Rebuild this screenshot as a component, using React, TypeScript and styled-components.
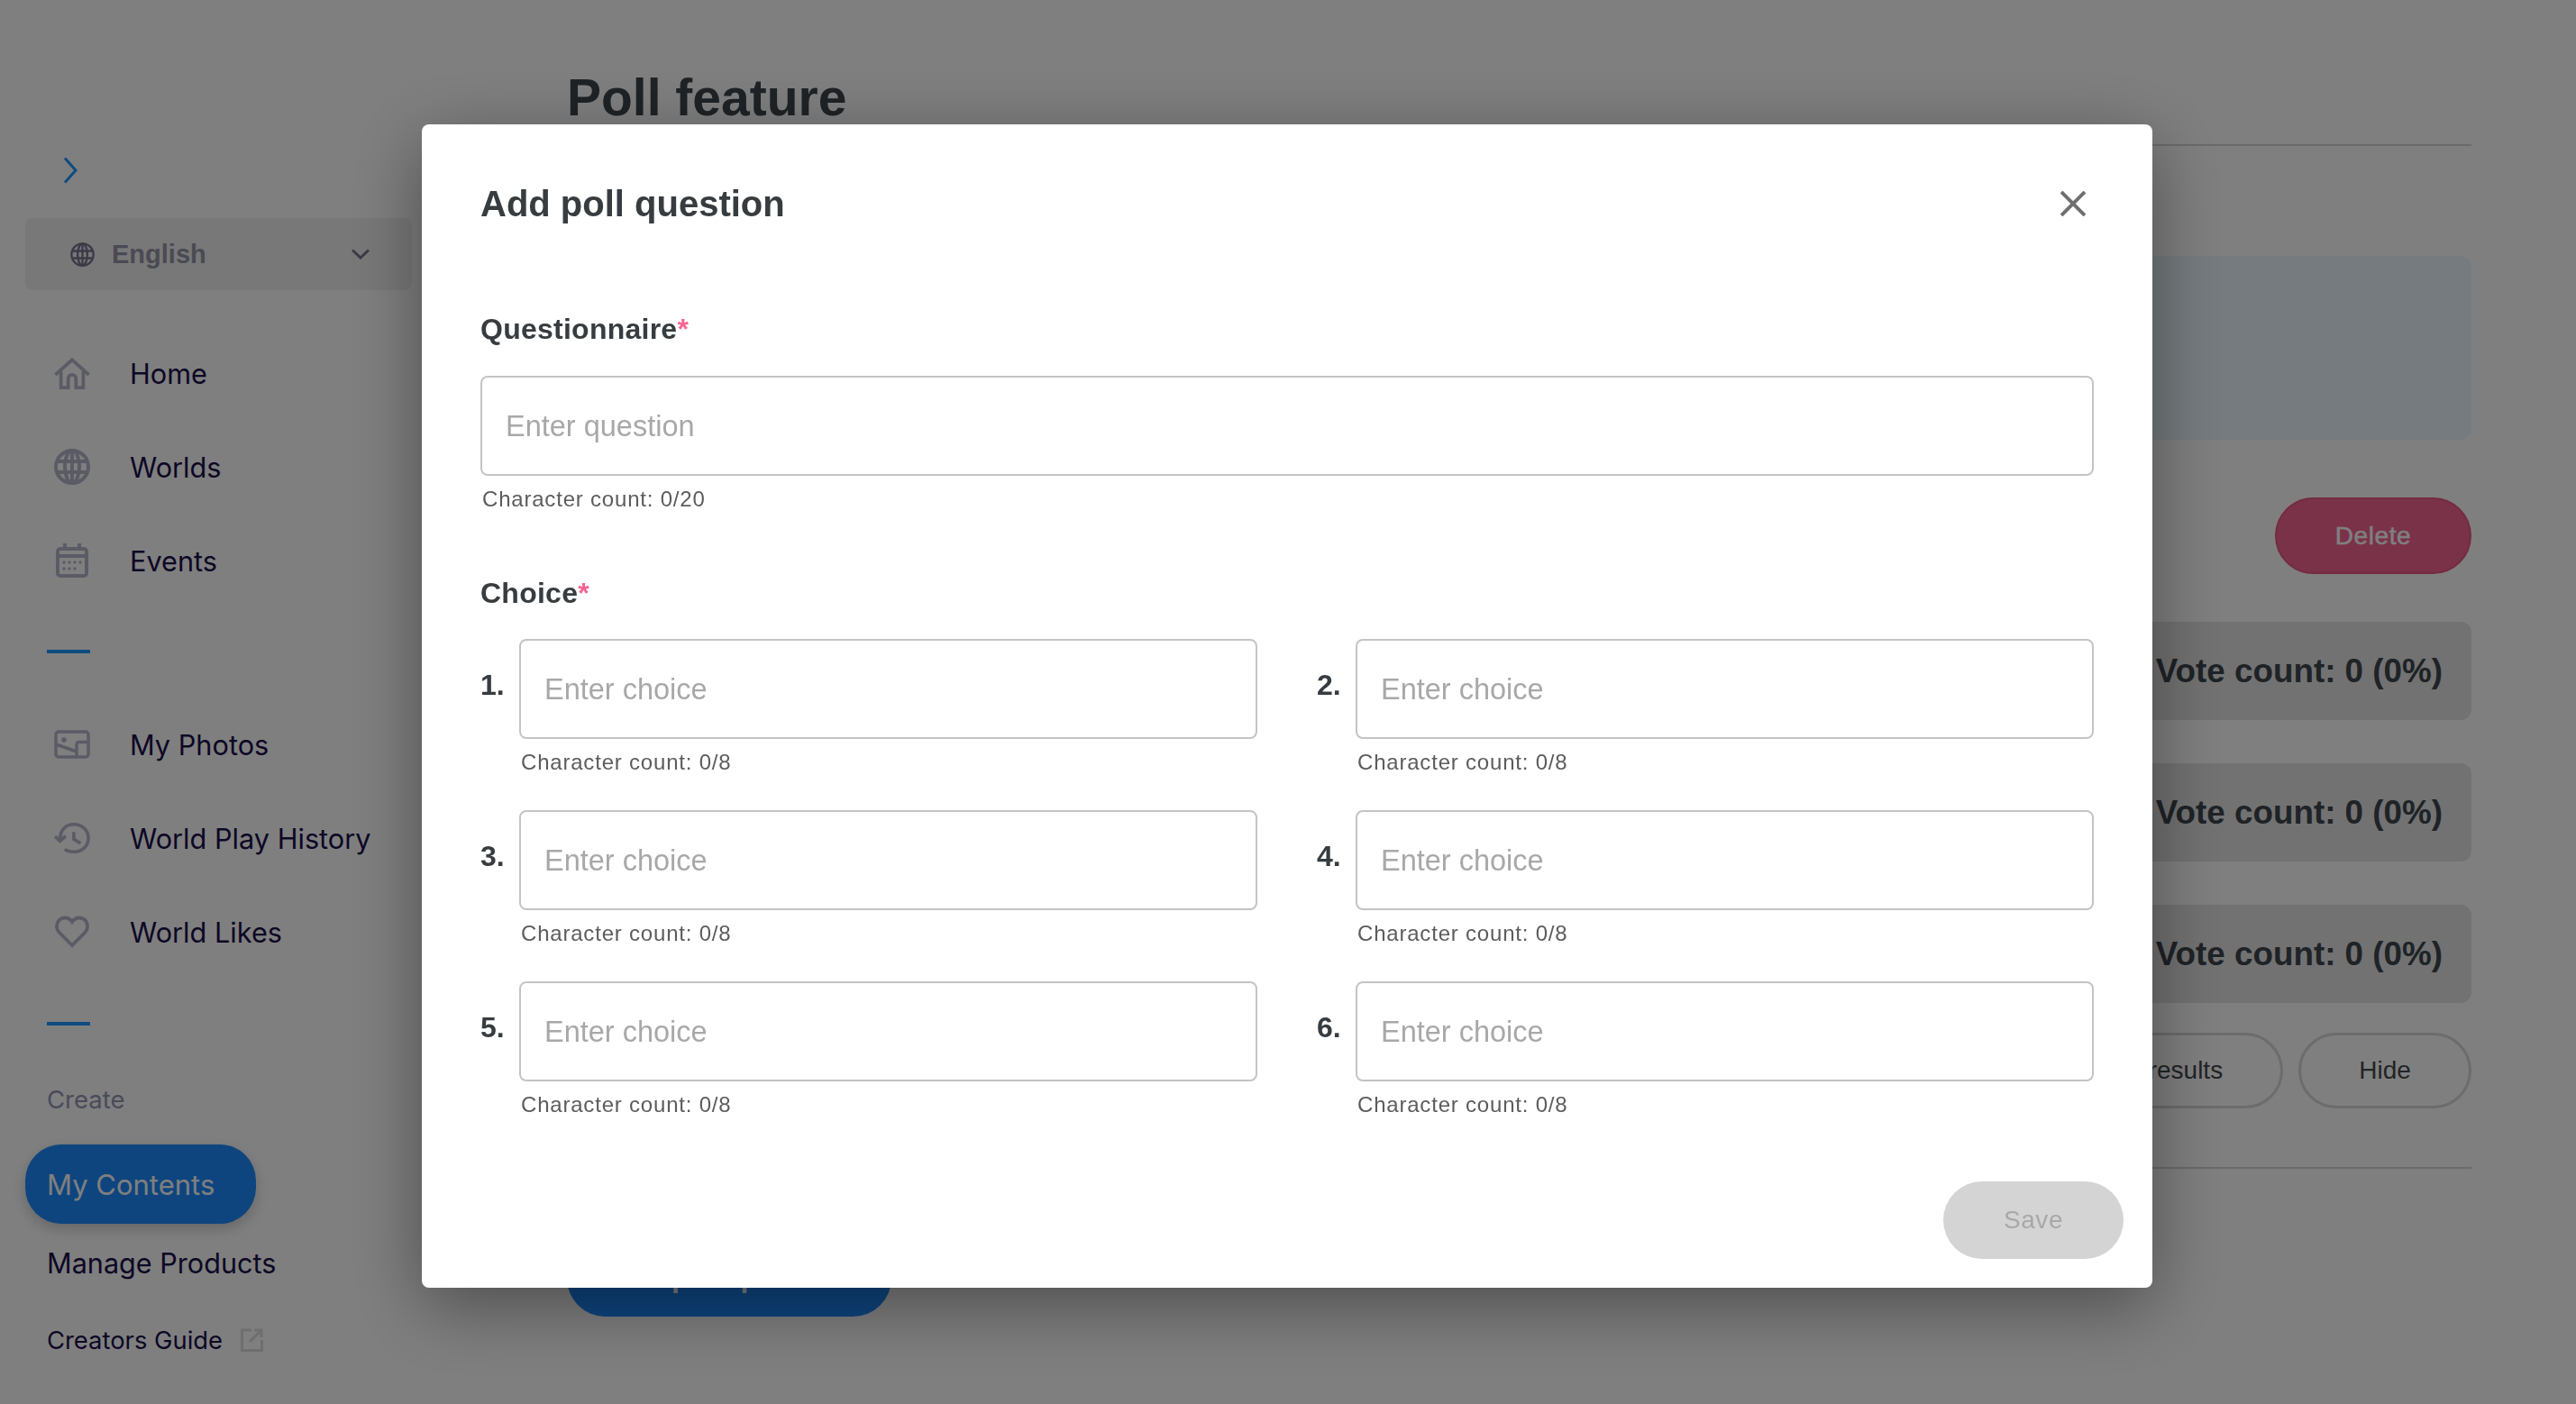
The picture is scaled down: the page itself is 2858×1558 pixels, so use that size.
import React from "react";
import styled, { createGlobalStyle } from "styled-components";

const GlobalStyle = createGlobalStyle`
  html, body {
    margin: 0;
    padding: 0;
    background: #fff;
    font-family: "Liberation Sans", Arial, sans-serif;
  }
  * {
    box-sizing: border-box;
  }
`;

const Page = styled.div`
  display: flex;
  width: 100%;
  height: 100vh;
  overflow: hidden;
  background: #fff;
`;

const Sidebar = styled.aside`
  flex: 0 0 629px;
  padding: 167px 0 0 28px;
  font-family: Inter, "Liberation Sans", sans-serif;
  color: #1a0f4c;
`;

const Collapse = styled.div`
  display: flex;
  align-items: center;
  height: 44px;
  padding-left: 42px;
  color: #1e98ff;
`;

const LanguageSelect = styled.div`
  display: flex;
  align-items: center;
  width: 429px;
  height: 80px;
  margin-top: 31px;
  padding: 0 47px 0 50px;
  background: #f0f0f0;
  border-radius: 8px;
  color: #78748e;
`;

const LanguageName = styled.span`
  flex: 1;
  margin-left: 19px;
  font-family: "Liberation Sans", sans-serif;
  font-size: 29px;
  font-weight: 700;
  color: #9494a8;
`;

const NavGroup = styled.nav<{ $top: number }>`
  margin-top: ${props => props.$top}px;
`;

const NavItem = styled.a`
  display: flex;
  align-items: center;
  height: 104px;
  padding-left: 32px;
  font-size: 30.7px;
  color: #1a0f4c;
`;

const NavIcon = styled.span`
  display: flex;
  justify-content: center;
  width: 40px;
  margin-right: 44px;
  color: #b6b6cc;
`;

const Rule = styled.div<{ $top: number }>`
  width: 48px;
  height: 4px;
  margin: ${props => props.$top}px 0 0 24px;
  background: #1e98ff;
`;

const SectionLabel = styled.div`
  height: 40px;
  margin: 62px 0 0 24px;
  font-size: 27.5px;
  line-height: 40px;
  color: #9494b4;
`;

const ActiveLink = styled.a`
  display: flex;
  align-items: center;
  width: 256px;
  height: 88px;
  margin-top: 30px;
  padding-left: 24px;
  background: #1c8aff;
  border-radius: 40px;
  box-shadow: 0 6px 16px rgba(0, 0, 0, 0.2);
  font-size: 31px;
  color: #fff;
`;

const PlainLink = styled.a<{ $top: number; $size: number }>`
  display: flex;
  align-items: center;
  height: 44px;
  margin: ${props => props.$top}px 0 0 24px;
  font-size: ${props => props.$size}px;
  color: #1a0f4c;
`;

const ExternalMark = styled.span`
  display: flex;
  margin-left: 20px;
  color: #dcdcdc;
`;

const Main = styled.main`
  flex: 0 0 2113px;
  padding-top: 76px;
`;

const PageTitle = styled.h1`
  height: 64px;
  margin: 0;
  font-size: 57px;
  font-weight: 700;
  line-height: 64px;
  color: #3e464c;
`;

const Divider = styled.hr<{ $top: number }>`
  height: 2px;
  margin: ${props => props.$top}px 0 0;
  border: 0;
  background: #d4d4d4;
`;

const Banner = styled.div`
  height: 204px;
  margin-top: 122px;
  background: #eaf6fc;
  border-radius: 12px;
`;

const ButtonRow = styled.div<{ $top: number }>`
  display: flex;
  justify-content: flex-end;
  gap: 17px;
  margin-top: ${props => props.$top}px;
`;

const DeleteButton = styled.button`
  width: 218px;
  height: 85px;
  background: #f46492;
  border: 2px solid #e85684;
  border-radius: 43px;
  font: 400 28px "Liberation Sans", sans-serif;
  letter-spacing: 0.6px;
  -webkit-text-stroke: 0.5px #fff;
  color: #fff;
`;

const OutlineButton = styled.button<{ $width: number }>`
  width: ${props => props.$width}px;
  height: 84px;
  background: #fff;
  border: 3px solid #d8d8d8;
  border-radius: 42px;
  font: 400 28px "Liberation Sans", sans-serif;
  color: #44484c;
`;

const VoteList = styled.div`
  display: flex;
  flex-direction: column;
  gap: 48px;
  margin-top: 53px;
`;

const VoteRow = styled.div`
  display: flex;
  align-items: center;
  justify-content: flex-end;
  height: 109px;
  padding-right: 32px;
  background: #e4e4e4;
  border-radius: 12px;
  font-size: 36.8px;
  font-weight: 700;
  color: #3e464c;
`;

const AddButton = styled.button`
  display: block;
  width: 360px;
  height: 85px;
  margin-top: 79px;
  padding: 0 0 3px;
  background: #1c8aff;
  border: 0;
  border-radius: 43px;
  font: 700 32px "Liberation Sans", sans-serif;
  color: #fff;
`;

const Overlay = styled.div`
  position: fixed;
  inset: 0;
  display: flex;
  justify-content: center;
  align-items: flex-start;
  padding: 138px 2px 0 0;
  background: rgba(0, 0, 0, 0.5);
`;

const Modal = styled.div`
  width: 1920px;
  height: 1291px;
  padding: 64px 65px 0;
  background: #fff;
  border-radius: 8px;
  box-shadow: 0 20px 80px rgba(0, 0, 0, 0.4);
  color: #373c41;
`;

const ModalHeader = styled.div`
  display: flex;
  align-items: center;
  justify-content: space-between;
  height: 48px;
  padding-right: 9px;
`;

const ModalTitle = styled.h2`
  margin: 0;
  font-size: 40px;
  font-weight: 700;
  line-height: 48px;
`;

const CloseIcon = styled.svg`
  display: block;
  color: #707070;
`;

const FieldLabel = styled.div<{ $top: number }>`
  height: 40px;
  margin-top: ${props => props.$top}px;
  font-size: 32px;
  font-weight: 700;
  line-height: 40px;
  letter-spacing: 0.25px;
`;

const Required = styled.span`
  color: #f46492;
`;

const TextInput = styled.input`
  display: block;
  width: 100%;
  height: 111px;
  padding: 1px 26px 0;
  background: #fff;
  border: 2.5px solid #c4c4c4;
  border-radius: 8px;
  outline: none;
  font: 400 32.5px "Liberation Sans", sans-serif;

  &::placeholder {
    color: #a8a8a8;
    opacity: 1;
  }
`;

const QuestionField = styled.div`
  margin-top: 32px;
`;

const Hint = styled.div`
  height: 30px;
  margin-top: 11px;
  padding-left: 2px;
  font-size: 24px;
  line-height: 30px;
  letter-spacing: 0.8px;
  color: #5c5c5c;
`;

const ChoiceGrid = styled.div`
  display: grid;
  grid-template-columns: 862px 862px;
  column-gap: 66px;
  row-gap: 38px;
  margin-top: 31px;
`;

const ChoiceCell = styled.div`
  display: flex;
`;

const ChoiceNumber = styled.span`
  flex: 0 0 43px;
  padding-top: 31px;
  font-size: 32px;
  font-weight: 700;
  line-height: 40px;
`;

const ChoiceField = styled.div`
  flex: 1;
`;

const ModalFooter = styled.div`
  display: flex;
  justify-content: flex-end;
  margin: 70px -33px 0 0;
`;

const SaveButton = styled.button`
  width: 200px;
  height: 86px;
  background: #d4d4d4;
  border: 0;
  border-radius: 43px;
  font: 400 28px "Liberation Sans", sans-serif;
  letter-spacing: 0.6px;
  color: #a8a8a8;
`;

const HomeIcon = () => (
  <svg width="42" height="37" viewBox="0 0 42 37" fill="none" stroke="currentColor" strokeWidth="4">
    <path d="M1.5 20 21 2.5 40.500 20" />
    <path d="M8 15.500V35H16.500V24.500a4.500 4.500 0 0 1 9 0V35H34V15.500" />
  </svg>
);

const GlobeIcon = ({ size = 40, weight = 4 }: { size?: number; weight?: number }) => (
  <svg width={size} height={size} viewBox="0 0 40 40" fill="none" stroke="currentColor" strokeWidth={weight}>
    <circle cx="20" cy="20" r="18" />
    <ellipse cx="20" cy="20" rx="8" ry="18" />
    <path d="M20 2V38M3 14H37M3 26H37" />
  </svg>
);

const CalendarIcon = () => (
  <svg width="36" height="38" viewBox="0 0 36 38" fill="none" stroke="currentColor" strokeWidth="4">
    <rect x="2" y="6" width="32" height="30" rx="3" />
    <path d="M10 0V6M26 0V6M2 14H34" />
    <g fill="currentColor" stroke="none">
      <circle cx="9" cy="21" r="1.700" />
      <circle cx="15" cy="21" r="1.700" />
      <circle cx="21" cy="21" r="1.700" />
      <circle cx="27" cy="21" r="1.700" />
      <circle cx="9" cy="28" r="1.700" />
      <circle cx="15" cy="28" r="1.700" />
      <circle cx="21" cy="28" r="1.700" />
    </g>
  </svg>
);

const PhotosIcon = () => (
  <svg width="40" height="32" viewBox="0 0 40 32" fill="none" stroke="currentColor" strokeWidth="3.500">
    <rect x="2" y="2" width="36" height="28" rx="3" />
    <circle cx="11" cy="11" r="2.800" fill="currentColor" stroke="none" />
    <path d="M2 16 25 24" />
    <path d="M25 30V16a2.500 2.500 0 0 1 2.500-2.500H38" />
  </svg>
);

const HistoryIcon = () => (
  <svg width="42" height="36" viewBox="0 0 42 36" fill="none" stroke="currentColor" strokeWidth="3.800">
    <path d="M7 19C7 9.500 13 2 23 2 32.500 2 40 9 40 18S33 34 23 34C18.500 34 15 33 12.500 31" />
    <path d="M1 16 7 21.500 13.500 15.500" />
    <path d="M23 11V19.500L31 24" />
  </svg>
);

const HeartIcon = () => (
  <svg width="38" height="36" viewBox="0 0 38 36" fill="none" stroke="currentColor" strokeWidth="3.800">
    <path d="M19 33 4.500 18.500C-.5 13 2.500 3 10.500 2.500 14 2.300 17 4 19 7 21 4 24 2.300 27.500 2.500 35.500 3 38.500 13 33.500 18.500Z" />
  </svg>
);

const ExternalIcon = () => (
  <svg width="25" height="26" viewBox="0 0 25 26" fill="none" stroke="currentColor" strokeWidth="3">
    <path d="M12 2H1.500V24.500H23.500V13" />
    <path d="M10 15 22 3M15 2H23V10" />
  </svg>
);

const ChevronRight = () => (
  <svg width="16" height="30" viewBox="0 0 16 30" fill="none" stroke="currentColor" strokeWidth="3">
    <path d="M2 1.500 14 15 2 28.500" />
  </svg>
);

const ChevronDown = () => (
  <svg width="20" height="12" viewBox="0 0 20 12" fill="none" stroke="currentColor" strokeWidth="3">
    <path d="M1 1.500 10 10 19 1.500" />
  </svg>
);

const primaryNav = [
  { label: "Home", icon: <HomeIcon /> },
  { label: "Worlds", icon: <GlobeIcon /> },
  { label: "Events", icon: <CalendarIcon /> }
];

const libraryNav = [
  { label: "My Photos", icon: <PhotosIcon /> },
  { label: "World Play History", icon: <HistoryIcon /> },
  { label: "World Likes", icon: <HeartIcon /> }
];

const choices = [1, 2, 3, 4, 5, 6];

export default function App() {
  return (
    <>
      <GlobalStyle />
      <Page>
        <Sidebar>
          <Collapse>
            <ChevronRight />
          </Collapse>
          <LanguageSelect>
            <GlobeIcon size={27} weight={3.500} />
            <LanguageName>English</LanguageName>
            <ChevronDown />
          </LanguageSelect>
          <NavGroup $top={40}>
            {primaryNav.map(item => (
              <NavItem key={item.label}>
                <NavIcon>{item.icon}</NavIcon>
                {item.label}
              </NavItem>
            ))}
          </NavGroup>
          <Rule $top={47} />
          <NavGroup $top={49}>
            {libraryNav.map(item => (
              <NavItem key={item.label}>
                <NavIcon>{item.icon}</NavIcon>
                {item.label}
              </NavItem>
            ))}
          </NavGroup>
          <Rule $top={48} />
          <SectionLabel>Create</SectionLabel>
          <ActiveLink>My Contents</ActiveLink>
          <PlainLink $top={21} $size={30.6}>Manage Products</PlainLink>
          <PlainLink $top={42} $size={27.4}>
            Creators Guide
            <ExternalMark>
              <ExternalIcon />
            </ExternalMark>
          </PlainLink>
        </Sidebar>

        <Main>
          <PageTitle>Poll feature</PageTitle>
          <Divider $top={20} />
          <Banner />
          <ButtonRow $top={64}>
            <DeleteButton>Delete</DeleteButton>
          </ButtonRow>
          <VoteList>
            <VoteRow>Vote count: 0 (0%)</VoteRow>
            <VoteRow>Vote count: 0 (0%)</VoteRow>
            <VoteRow>Vote count: 0 (0%)</VoteRow>
          </VoteList>
          <ButtonRow $top={33}>
            <OutlineButton $width={294}>Show results</OutlineButton>
            <OutlineButton $width={192}>Hide</OutlineButton>
          </ButtonRow>
          <Divider $top={65} />
          <AddButton>Add poll question</AddButton>
        </Main>
      </Page>

      <Overlay>
        <Modal>
          <ModalHeader>
            <ModalTitle>Add poll question</ModalTitle>
            <CloseIcon width="28" height="28" viewBox="0 0 28 28" fill="none" stroke="currentColor" strokeWidth="4">
              <path d="M1 1 27 27M27 1 1 27" />
            </CloseIcon>
          </ModalHeader>

          <FieldLabel $top={95}>
            Questionnaire<Required>*</Required>
          </FieldLabel>
          <QuestionField>
            <TextInput placeholder="Enter question" />
            <Hint>Character count: 0/20</Hint>
          </QuestionField>

          <FieldLabel $top={69}>
            Choice<Required>*</Required>
          </FieldLabel>
          <ChoiceGrid>
            {choices.map(choice => (
              <ChoiceCell key={choice}>
                <ChoiceNumber>{choice}.</ChoiceNumber>
                <ChoiceField>
                  <TextInput placeholder="Enter choice" />
                  <Hint>Character count: 0/8</Hint>
                </ChoiceField>
              </ChoiceCell>
            ))}
          </ChoiceGrid>

          <ModalFooter>
            <SaveButton>Save</SaveButton>
          </ModalFooter>
        </Modal>
      </Overlay>
    </>
  );
}
